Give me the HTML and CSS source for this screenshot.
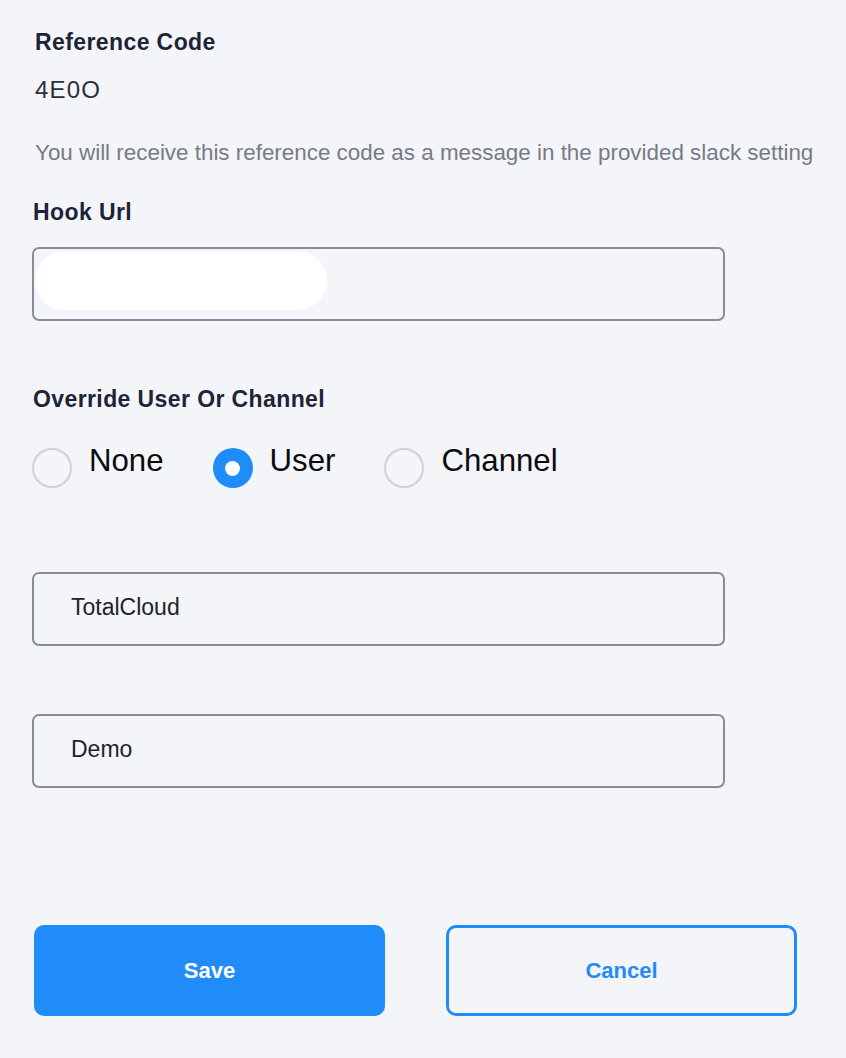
FILE: index.html
```html
<!DOCTYPE html>
<html lang="en">
<head>
<meta charset="utf-8">
<title>Slack Settings</title>
<link rel="stylesheet" href="styles.css">
</head>
<body>
<div class="page">
  <div class="ref">
    <div class="label">Reference Code</div>
    <div class="code">4E0O</div>
    <div class="hint">You will receive this reference code as a message in the provided slack setting</div>
  </div>
  <div class="label hook-label">Hook Url</div>
  <div class="field field-hook"><div class="redact"></div></div>
  <div class="label override-label">Override User Or Channel</div>
  <div class="radios">
    <div class="radio-item"><span class="radio"></span><span class="radio-text">None</span></div>
    <div class="radio-item"><span class="radio checked"></span><span class="radio-text">User</span></div>
    <div class="radio-item"><span class="radio"></span><span class="radio-text">Channel</span></div>
  </div>
  <div class="field field-first"><span class="field-text">TotalCloud</span></div>
  <div class="field field-second"><span class="field-text">Demo</span></div>
  <div class="actions">
    <button class="btn btn-save">Save</button>
    <button class="btn btn-cancel">Cancel</button>
  </div>
</div>
</body>
</html>
```

FILE: styles.css
```css
html, body {
  margin: 0;
  padding: 0;
  background: #f4f5f9;
}
body {
  font-family: "Liberation Sans", Arial, sans-serif;
  width: 846px;
  height: 1058px;
  overflow: hidden;
}
.page {
  padding: 28px 0 0 32px;
}
.ref {
  padding-left: 3px;
}
.label {
  font-weight: 700;
  font-size: 23px;
  line-height: 28px;
  letter-spacing: 0.4px;
  color: #1d2438;
}
.code {
  margin-top: 20px;
  font-size: 24px;
  line-height: 28px;
  letter-spacing: 1.2px;
  color: #2b303b;
}
.hint {
  margin-top: 35px;
  font-size: 22.4px;
  line-height: 28px;
  color: #767b86;
  white-space: nowrap;
}
.hook-label {
  margin-top: 31px;
  padding-left: 1px;
}
.field {
  box-sizing: border-box;
  width: 693px;
  height: 74px;
  border: 2px solid #898d98;
  border-radius: 7px;
  padding: 0 0 4px 37px;
  line-height: 66px;
  font-size: 23px;
  color: #222327;
}
.field-hook {
  margin-top: 21px;
  padding: 2px 0 0 1px;
}
.redact {
  width: 292px;
  height: 59px;
  border-radius: 30px;
  background: #ffffff;
}
.override-label {
  margin-top: 64px;
  padding-left: 1px;
}
.radios {
  margin-top: 30px;
  display: flex;
  align-items: flex-start;
  gap: 49px;
  height: 45px;
}
.radio-item {
  display: flex;
  align-items: flex-start;
  gap: 17px;
}
.radio {
  box-sizing: border-box;
  width: 40px;
  height: 40px;
  margin-top: 5px;
  border-radius: 50%;
  border: 2px solid #ced2d8;
  display: flex;
  align-items: center;
  justify-content: center;
}
.radio.checked {
  border: none;
  background: #1f8cf9;
}
.radio.checked::after {
  content: "";
  width: 15px;
  height: 15px;
  border-radius: 50%;
  background: #ffffff;
}
.radio-text {
  font-size: 31.2px;
  line-height: 36px;
  color: #0b0b0d;
}
.field-first {
  margin-top: 84px;
}
.field-second {
  margin-top: 68px;
}
.actions {
  margin-top: 137px;
  padding-left: 2px;
  display: flex;
  gap: 61px;
}
.btn {
  box-sizing: border-box;
  width: 351px;
  height: 91px;
  border-radius: 10px;
  font-family: "Liberation Sans", Arial, sans-serif;
  font-weight: 700;
  font-size: 22px;
  cursor: pointer;
}
.btn-save {
  background: #1f8cf9;
  border: none;
  color: #ffffff;
}
.btn-cancel {
  background: transparent;
  border: 3px solid #1f8cf9;
  color: #1f8cf9;
}
```
